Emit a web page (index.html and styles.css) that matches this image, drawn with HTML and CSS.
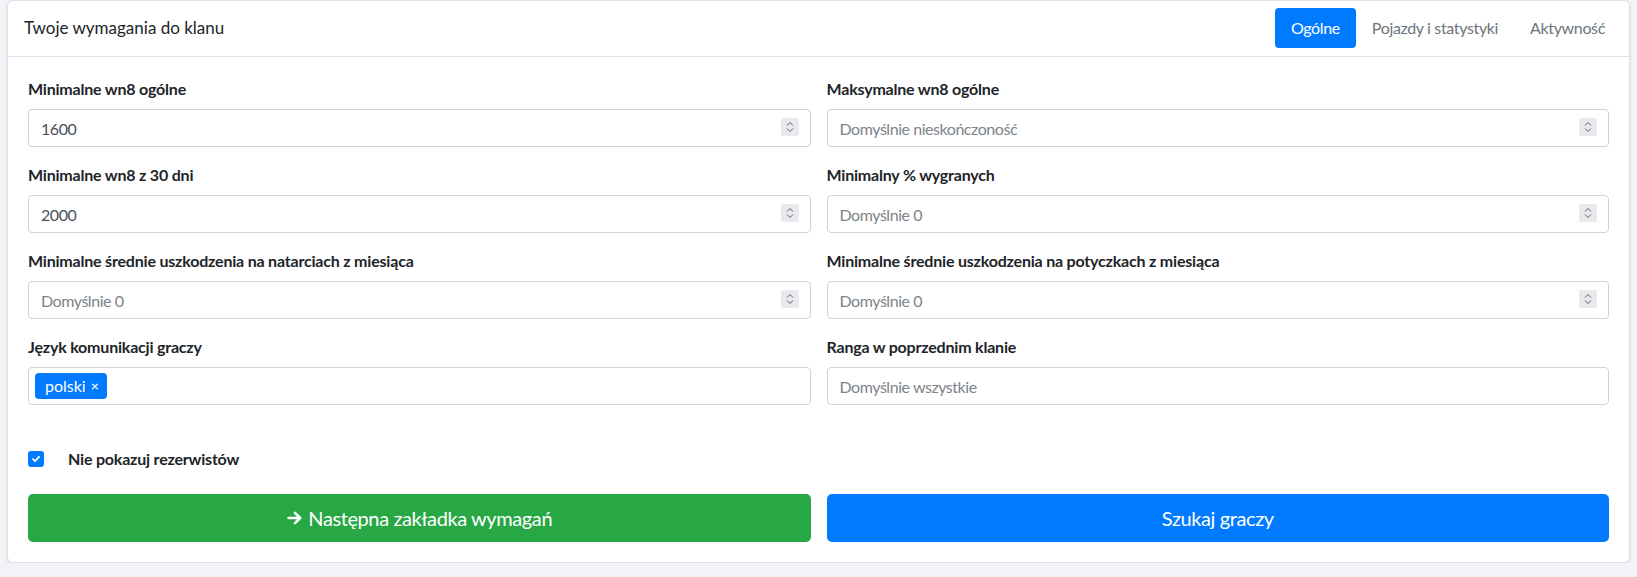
FILE: index.html
```html
<!DOCTYPE html>
<html lang="pl">
<head>
<meta charset="utf-8">
<title>Twoje wymagania do klanu</title>
<link rel="stylesheet" href="styles.css">
</head>
<body>
<div class="page">
  <div class="card">
    <div class="card-header">
      <div class="card-title">Twoje wymagania do klanu</div>
      <nav class="pills">
        <a class="pill active">Ogólne</a>
        <a class="pill">Pojazdy i statystyki</a>
        <a class="pill">Aktywność</a>
      </nav>
    </div>
    <div class="card-body">
      <div class="form-grid">
        <div class="form-group">
          <label class="label">Minimalne wn8 ogólne</label>
          <div class="num-wrap">
            <input class="control" type="text" value="1600">
            <span class="spin"><svg width="18" height="18" viewBox="0 0 18 18"><path d="M6 7.5 9 4.5 12 7.5M6 10.5 9 13.5 12 10.5" fill="none" stroke="#5b5b66" stroke-width="1"/></svg></span>
          </div>
        </div>
        <div class="form-group">
          <label class="label">Maksymalne wn8 ogólne</label>
          <div class="num-wrap">
            <input class="control" type="text" placeholder="Domyślnie nieskończoność">
            <span class="spin"><svg width="18" height="18" viewBox="0 0 18 18"><path d="M6 7.5 9 4.5 12 7.5M6 10.5 9 13.5 12 10.5" fill="none" stroke="#5b5b66" stroke-width="1"/></svg></span>
          </div>
        </div>
        <div class="form-group">
          <label class="label">Minimalne wn8 z 30 dni</label>
          <div class="num-wrap">
            <input class="control" type="text" value="2000">
            <span class="spin"><svg width="18" height="18" viewBox="0 0 18 18"><path d="M6 7.5 9 4.5 12 7.5M6 10.5 9 13.5 12 10.5" fill="none" stroke="#5b5b66" stroke-width="1"/></svg></span>
          </div>
        </div>
        <div class="form-group">
          <label class="label">Minimalny % wygranych</label>
          <div class="num-wrap">
            <input class="control" type="text" placeholder="Domyślnie 0">
            <span class="spin"><svg width="18" height="18" viewBox="0 0 18 18"><path d="M6 7.5 9 4.5 12 7.5M6 10.5 9 13.5 12 10.5" fill="none" stroke="#5b5b66" stroke-width="1"/></svg></span>
          </div>
        </div>
        <div class="form-group">
          <label class="label">Minimalne średnie uszkodzenia na natarciach z miesiąca</label>
          <div class="num-wrap">
            <input class="control" type="text" placeholder="Domyślnie 0">
            <span class="spin"><svg width="18" height="18" viewBox="0 0 18 18"><path d="M6 7.5 9 4.5 12 7.5M6 10.5 9 13.5 12 10.5" fill="none" stroke="#5b5b66" stroke-width="1"/></svg></span>
          </div>
        </div>
        <div class="form-group">
          <label class="label">Minimalne średnie uszkodzenia na potyczkach z miesiąca</label>
          <div class="num-wrap">
            <input class="control" type="text" placeholder="Domyślnie 0">
            <span class="spin"><svg width="18" height="18" viewBox="0 0 18 18"><path d="M6 7.5 9 4.5 12 7.5M6 10.5 9 13.5 12 10.5" fill="none" stroke="#5b5b66" stroke-width="1"/></svg></span>
          </div>
        </div>
        <div class="form-group">
          <label class="label">Język komunikacji graczy</label>
          <div class="tags">
            <span class="tag">polski <span class="tag-x">×</span></span>
          </div>
        </div>
        <div class="form-group">
          <label class="label">Ranga w poprzednim klanie</label>
          <input class="control" type="text" placeholder="Domyślnie wszystkie">
        </div>
      </div>
      <div class="check-row">
        <span class="checkbox"><svg width="10" height="10" viewBox="0 0 10 10"><path d="M2 5.2 4 7.2 8 2.8" fill="none" stroke="#fff" stroke-width="1.8" stroke-linecap="round" stroke-linejoin="round"/></svg></span>
        <span class="check-label">Nie pokazuj rezerwistów</span>
      </div>
      <div class="btn-grid">
        <button class="btn btn-green"><svg class="arrow" width="18" height="18" viewBox="0 0 18 18"><path d="M2.5 9h11M9 3.8 14.2 9 9 14.2" fill="none" stroke="#fff" stroke-width="2.6" stroke-linecap="round" stroke-linejoin="round"/></svg>Następna zakładka wymagań</button>
        <button class="btn btn-blue">Szukaj graczy</button>
      </div>
    </div>
  </div>
</div>
</body>
</html>
```

FILE: styles.css
```css
* { box-sizing: border-box; }
html, body { margin: 0; padding: 0; }
body {
  background: #f2f3f7;
  font-family: "Lato", "Liberation Sans", sans-serif;
  font-size: 16px;
  line-height: 24px;
  color: #212529;
}
.page { padding: 0 7px; }
.card {
  background: #fff;
  border: 1px solid #dfe1e6;
  border-radius: 6px;
  box-shadow: 0 1px 3px rgba(0,0,0,0.12);
}
.card-header {
  display: flex;
  justify-content: space-between;
  align-items: center;
  padding: 7px 8px 8px 16px;
  border-bottom: 1px solid #dcdfe3;
}
.card-title { color: #212529; font-size: 17px; }
.pills { display: flex; }
.pill {
  display: block;
  height: 40px;
  line-height: 40px;
  padding: 0 16px;
  color: #6c757d;
  border-radius: 4px;
  letter-spacing: -0.35px;
}
.pill.active { background: #007bff; color: #fff; }
.card-body { padding: 20px; }
.form-grid {
  display: grid;
  grid-template-columns: 1fr 1fr;
  column-gap: 16px;
  row-gap: 16px;
}
.label {
  display: block;
  font-weight: 700;
  margin-bottom: 8px;
  letter-spacing: -0.2px;
}
.num-wrap { position: relative; }
.control {
  display: block;
  width: 100%;
  height: 38px;
  padding: 6px 12px;
  border: 1px solid #ced4da;
  border-radius: 4px;
  font-family: inherit;
  font-size: 16px;
  letter-spacing: -0.45px;
  color: #495057;
  background: #fff;
  outline: none;
}
.control::placeholder { color: #7d848b; opacity: 1; }
.spin {
  position: absolute;
  right: 12px;
  top: 9px;
  width: 18px;
  height: 18px;
  background: #e9e9ed;
  border-radius: 2px;
}
.spin svg { display: block; }
.tags {
  height: 38px;
  border: 1px solid #ced4da;
  border-radius: 4px;
  padding: 5px 6px;
  display: flex;
  align-items: center;
}
.tag {
  display: inline-flex;
  align-items: center;
  height: 26px;
  padding: 0 8px 0 10px;
  background: #007bff;
  color: #fff;
  border-radius: 4px;
  line-height: 26px;
}
.tag-x { margin-left: 5px; font-size: 14px; opacity: 0.85; font-weight: 700; }
.check-row {
  display: flex;
  align-items: center;
  margin-top: 42px;
  height: 24px;
}
.checkbox {
  width: 16px;
  height: 16px;
  border-radius: 3px;
  background: #007bff;
  display: flex;
  align-items: center;
  justify-content: center;
}
.check-label { margin-left: 24px; font-weight: 700; letter-spacing: -0.2px; }
.btn-grid {
  display: grid;
  grid-template-columns: 1fr 1fr;
  column-gap: 16px;
  margin-top: 23px;
}
.btn {
  height: 48px;
  border: none;
  border-radius: 5px;
  color: #fff;
  font-family: inherit;
  font-size: 20px;
  letter-spacing: -0.4px;
  display: flex;
  align-items: center;
  justify-content: center;
}
.btn-green { background: #28a745; }
.btn-blue { background: #007bff; }
.arrow { margin-right: 4px; }
```
